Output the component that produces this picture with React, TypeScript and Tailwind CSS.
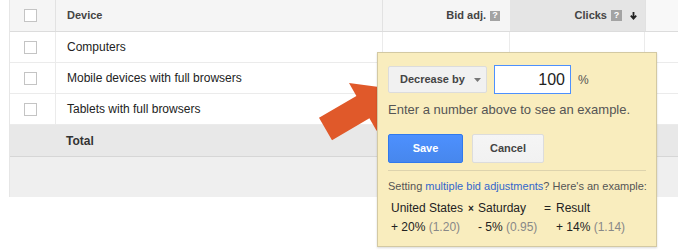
import React from "react";

const font = { fontFamily: '"Liberation Sans", Arial, sans-serif' };

function Checkbox() {
  return <div className="w-[13px] h-[13px] border border-[#c4c4c4] bg-white" />;
}

function QIcon({ size = "w-[10px] h-[10px]" }: { size?: string }) {
  return (
    <span
      className={`${size} inline-flex items-center justify-center bg-[#a3a3a3] text-white text-[9px] font-bold leading-none`}
    >
      ?
    </span>
  );
}

function Row({ label }: { label: string }) {
  return (
    <div className="flex h-[31px] border-b border-[#ebebeb] bg-white">
      <div className="w-[46px] flex items-center pl-[14px] border-r border-[#ebebeb]">
        <Checkbox />
      </div>
      <div className="w-[327px] flex items-center pl-[11px] text-[12px] text-[#222] border-r border-[#ebebeb]">
        {label}
      </div>
      <div className="w-[127px] border-r border-[#ebebeb]" />
      <div className="w-[135px] border-r border-[#ebebeb]" />
      <div className="flex-1" />
    </div>
  );
}

export default function App() {
  return (
    <div className="relative w-[678px] h-[252px] overflow-hidden bg-white" style={font}>
      <div className="ml-[9px] border-l border-[#e6e6e6]">
        {/* header */}
        <div className="flex h-[32px] border-b border-[#dcdcdc] bg-[#f5f5f5] text-[11px] font-bold text-[#444]">
          <div className="w-[46px] flex items-center pl-[14px] border-r border-[#e2e2e2]">
            <Checkbox />
          </div>
          <div className="w-[327px] flex items-center pl-[11px] border-r border-[#e2e2e2]">Device</div>
          <div className="w-[127px] flex items-center justify-end gap-[4px] pr-[10px]">
            <span>Bid adj.</span>
            <QIcon />
          </div>
          <div className="w-[135px] flex items-center justify-end pr-[8px] bg-[#e5e5e5]">
            <span>Clicks</span>
            <span className="ml-[4px] flex">
              <QIcon size="w-[11px] h-[11px]" />
            </span>
            <svg className="ml-[8px]" width="7" height="8" viewBox="0 0 7 8">
              <path d="M3.5 0v6M0.8 3.6L3.5 6.6 6.2 3.6" stroke="#222" strokeWidth="1.8" fill="none" />
            </svg>
          </div>
          <div className="flex-1 bg-[#f8f8f8] border-l border-[#e2e2e2]" />
        </div>
        <Row label="Computers" />
        <Row label="Mobile devices with full browsers" />
        <Row label="Tablets with full browsers" />
        {/* total */}
        <div className="flex h-[32px] items-center border-b border-[#d6d6d6] bg-[#e8e8e8] pl-[56px] text-[12px] font-bold text-[#333]">
          Total
        </div>
        <div className="h-[40px] bg-[#efefef]" />
      </div>

      {/* arrow */}
      <svg className="absolute left-0 top-0" width="678" height="252" viewBox="0 0 678 252">
        <polygon
          points="394,89 349,83 356.4,95.9 319,117.8 332,140.2 369.4,118.3 376.7,130.9"
          fill="#e0592a"
        />
      </svg>

      {/* popup */}
      <div className="absolute left-[377px] top-[52px] w-[280px] h-[195px] bg-[#f9edbe] border border-[#d3c9a3] shadow-[0_1px_2px_rgba(0,0,0,0.15)] pl-[10px] pr-[6px] pt-[12px]">
        <div className="flex items-center h-[29px]">
          <div className="w-[99px] h-[27px] flex items-center pl-[11px] bg-[#f1f1f1] border border-[#dcdcdc] rounded-[2px] text-[11px] font-bold text-[#444]">
            <span>Decrease by</span>
            <svg className="ml-[9px]" width="7" height="4" viewBox="0 0 7 4">
              <path d="M0 0h7L3.5 4z" fill="#777" />
            </svg>
          </div>
          <div className="ml-[7px] w-[77px] h-[29px] bg-white border border-[#4d90fe] flex items-center justify-end pr-[5px] text-[16px] text-[#222]">
            100
          </div>
          <span className="ml-[7px] text-[12px] text-[#555]">%</span>
        </div>
        <div className="mt-[8px] text-[13px] leading-[16px] text-[#555] whitespace-nowrap">
          Enter a number above to see an example.
        </div>
        <div className="mt-[16px] flex gap-[9px]">
          <div className="w-[75px] h-[29px] flex items-center justify-center rounded-[2px] border border-[#3079ed] bg-gradient-to-b from-[#4d90fe] to-[#4787ed] text-white text-[11px] font-bold">
            Save
          </div>
          <div className="w-[72px] h-[29px] flex items-center justify-center rounded-[2px] border border-[#dcdcdc] bg-gradient-to-b from-[#f5f5f5] to-[#f1f1f1] text-[#444] text-[11px] font-bold">
            Cancel
          </div>
        </div>
        <div className="mt-[7px] mr-[4px] h-px bg-[#ddd3ad]" />
        <div className="mt-[8px] text-[11px] leading-[14px] text-[#555] whitespace-nowrap">
          Setting <span className="text-[#3366cc]">multiple bid adjustments</span>? Here's an example:
        </div>
        <div className="mt-[6px] pl-[3px] text-[12px] leading-[19px] text-[#222] whitespace-nowrap">
          <div className="flex">
            <span className="w-[77px]">United States</span>
            <span className="w-[10px] font-bold text-[10px]">×</span>
            <span className="w-[66px]">Saturday</span>
            <span className="w-[12px]">=</span>
            <span>Result</span>
          </div>
          <div className="flex">
            <span className="w-[87px]">
              + 20% <span className="text-[#888]">(1.20)</span>
            </span>
            <span className="w-[78px]">
              - 5% <span className="text-[#888]">(0.95)</span>
            </span>
            <span>
              + 14% <span className="text-[#888]">(1.14)</span>
            </span>
          </div>
        </div>
      </div>
    </div>
  );
}
